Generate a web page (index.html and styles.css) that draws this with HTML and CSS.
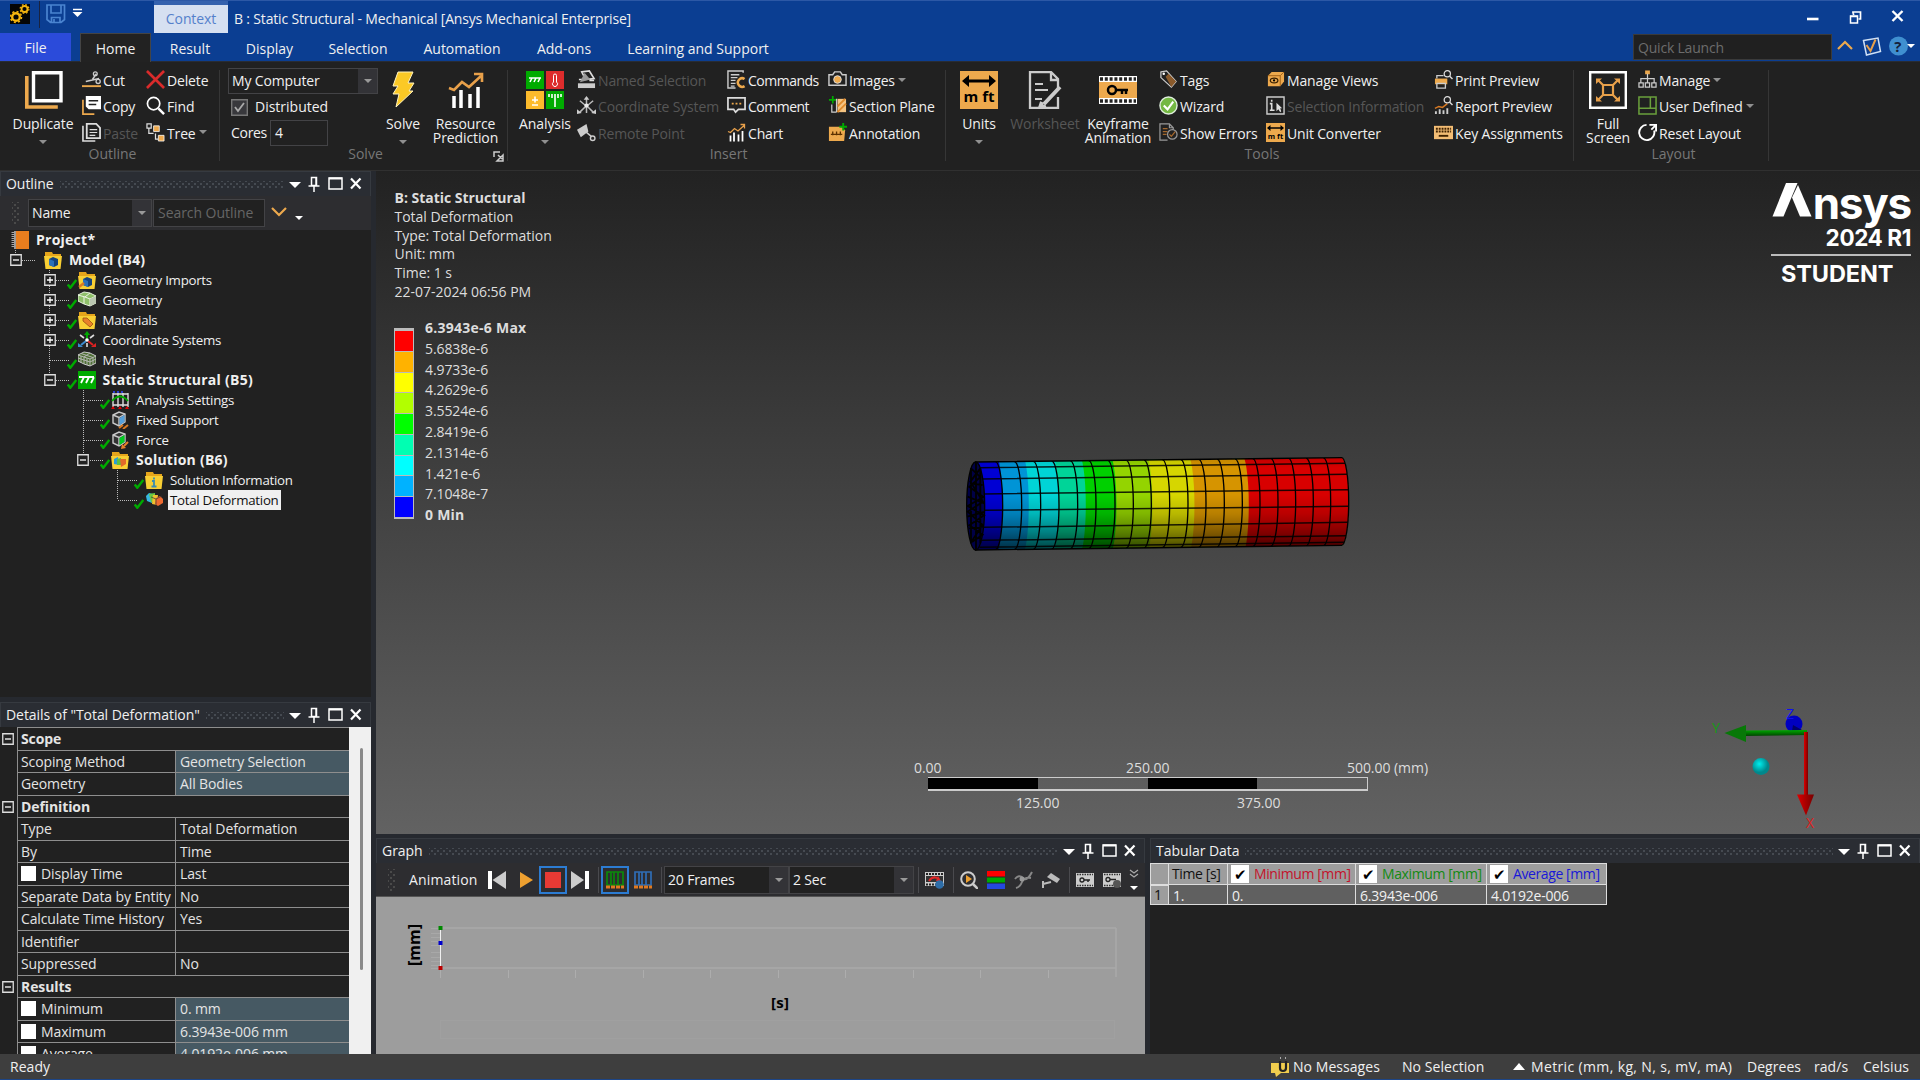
FILE: index.html
```html
<!DOCTYPE html>
<html lang="en">
<head>
<meta charset="utf-8">
<title>B : Static Structural - Mechanical</title>
<link rel="stylesheet" href="styles.css">
</head>
<body>
<svg class="defs" width="0" height="0">
  <defs>
    <symbol id="ctl" viewBox="0 0 76 18">
      <path d="M0 7h12l-6 6z" fill="#fff"/>
      <path d="M22.500 2.500h5v8h-5zM27 3v8M19.500 11h11M25 11v6" fill="none" stroke="#fff" stroke-width="1.500"/>
      <path d="M40 3h13v11h-13z" fill="none" stroke="#fff" stroke-width="1.500"/><path d="M40 3.500h13" stroke="#fff" stroke-width="2"/>
      <path d="M62 3.500l9.500 10M71.500 3.500l-9.500 10" stroke="#fff" stroke-width="2.200"/>
    </symbol>
    <symbol id="folder" viewBox="0 0 18 18"><path d="M1 1h7l1 2h8v3H1z" fill="#e5a51b"/><path d="M0 5h18l-1.500 13h-15z" fill="#f8cf34"/></symbol>
    <symbol id="check" viewBox="0 0 10 10"><path d="M.8 5.500l2.500 3.300L9.300 1" fill="none" stroke="#0a0" stroke-width="2.400"/></symbol>
    <symbol id="cube" viewBox="0 0 18 18"><path d="M2 4l6-3 6 2v8l-6 4-6-3z" fill="#333" stroke="#c8c8c8" stroke-width="1.400"/><path d="M2 4l6 2.500L14 3M8 6.500V15" fill="none" stroke="#c8c8c8" stroke-width="1.400"/></symbol>
    <symbol id="minus" viewBox="0 0 12 12"><path d="M.75.75h10.500v10.500H.75z" fill="#222" stroke="#ddd" stroke-width="1.300"/><path d="M3 6h6" stroke="#fff" stroke-width="1.300"/></symbol>
    <symbol id="plus" viewBox="0 0 12 12"><path d="M.75.75h10.500v10.500H.75z" fill="#222" stroke="#ddd" stroke-width="1.300"/><path d="M3 6h6M6 3v6" stroke="#fff" stroke-width="1.300"/></symbol>
    <symbol id="chart" viewBox="0 0 38 38"><path d="M2 17l5 2 8-8 7 5L34 5M27 3h8v8" fill="none" stroke="#e8a04a" stroke-width="2.600"/><path d="M7 25v12M14 19v18M23 23v14M31 16v21" stroke="#fff" stroke-width="3.500"/></symbol>
    <symbol id="mft" viewBox="0 0 38 38"><path d="M0 0h38v38H0z" fill="#eda94d"/><path d="M2 10l7-6v4.500h20V4l7 6-7 6v-4.500H9V16z" fill="#000"/><text x="3.500" y="31" font-family="Open Sans" font-weight="700" font-size="15" textLength="31">m ft</text></symbol>
    <symbol id="film" viewBox="0 0 38 28"><path d="M0 0h38v28H0z" fill="#fff"/><path d="M1 3h36M1 25h36" stroke="#222" stroke-width="3.500" stroke-dasharray="3 1.800"/></symbol>
  </defs>
</svg>

<header class="titlebar">
  <svg class="app" width="20" height="20" viewBox="0 0 20 20"><path d="M0 0h20v20H0z" fill="#050505"/><circle cx="6" cy="13" r="3.800" fill="none" stroke="#f5b50f" stroke-width="2.400"/><circle cx="6" cy="13" r="5.500" fill="none" stroke="#f5b50f" stroke-width="1.600" stroke-dasharray="2 2.300"/><circle cx="14.500" cy="5" r="3" fill="none" stroke="#f5b50f" stroke-width="1.800"/><circle cx="14.500" cy="5" r="4.400" fill="none" stroke="#f5b50f" stroke-width="1.200" stroke-dasharray="1.700 1.800"/></svg>
  <i class="tsep"></i>
  <svg class="save" width="20" height="20" viewBox="0 0 20 20"><path d="M1 1h17.500v14.500L15 18.500H4.500L1 15.500zM5 1v8h10V1M5.500 18.500v-5h8.500v5M8 15v3.500" fill="none" stroke="#4a84d0" stroke-width="1.700"/></svg>
  <svg class="qat" width="11" height="10" viewBox="0 0 11 10"><path d="M1 1.500h9" stroke="#fff" stroke-width="1.500"/><path d="M.5 4h10l-5 5z" fill="#fff"/></svg>
  <span class="context">Context</span>
  <span class="title">B : Static Structural - Mechanical [Ansys Mechanical Enterprise]</span>
  <svg class="winctl" width="100" height="16" viewBox="0 0 100 16"><path d="M0 11h11.500" stroke="#fff" stroke-width="2.600"/><path d="M43.500 8h7v7h-7z" fill="none" stroke="#fff" stroke-width="1.500"/><path d="M43 8.500h8M46.500 7V5.500M46 5.500V4h7.500v7H51.500M46 4h8" fill="none" stroke="#fff" stroke-width="1.700"/><path d="M85.500 3l10 10M95.500 3l-10 10" stroke="#fff" stroke-width="2.400"/></svg>
</header>

<nav class="tabs">
  <span class="file">File</span><span class="tab home">Home</span><span class="tab t1">Result</span><span class="tab t2">Display</span><span class="tab t3">Selection</span><span class="tab t4">Automation</span><span class="tab t5">Add-ons</span><span class="tab t6">Learning and Support</span>
  <div class="quick">Quick Launch</div>
  <svg class="tabicons" width="78" height="22" viewBox="0 0 78 22"><path d="M1 14l7-7 7 7" fill="none" stroke="#eda94d" stroke-width="2.200"/><path d="M26.500 5.500L41 3l2.500 13.500L29.500 20z" fill="none" stroke="#cfe0f6" stroke-width="1.500"/><path d="M29.500 10l4 6 5-11.500" fill="none" stroke="#e8a04a" stroke-width="2"/><circle cx="61.500" cy="11" r="9.500" fill="#3f8fd0"/><text x="57.200" y="16.500" font-size="15" font-weight="700" fill="#14213a">?</text><path d="M70 9h8l-4 4z" fill="#fff"/></svg>
</nav>

<section class="ribbon">
  <div class="group g-outline">
    <div class="items">
      <div class="big b-dup"><svg width="38" height="38" viewBox="0 0 38 38"><path d="M1 6v31h31" fill="none" stroke="#eda94d" stroke-width="3.600" transform="translate(.8 -1)"/><path d="M8.500 1.700h27.500v28H8.500z" fill="#222" stroke="#fff" stroke-width="3.400"/></svg><span>Duplicate</span><i class="dd"></i></div>
      <div class="col c64">
        <div class="btn"><svg viewBox="0 0 20 20"><path d="M0 17h20" stroke="#eda94d" stroke-width="2"/><path d="M4 12L18 9M11 10l4-6" stroke="#ccc" stroke-width="1.600"/><circle cx="14" cy="4" r="2" fill="none" stroke="#ccc" stroke-width="1.400"/><circle cx="17" cy="12" r="2.200" fill="none" stroke="#ccc" stroke-width="1.400"/></svg>Cut</div>
        <div class="btn"><svg viewBox="0 0 20 20"><path d="M1 4v15h12" fill="none" stroke="#eda94d" stroke-width="1.800"/><path d="M4 0h16v14H7l-3-3z" fill="#fff"/><path d="M7 5h10M7 9h8" stroke="#222" stroke-width="1.500"/></svg>Copy</div>
        <div class="btn off"><svg viewBox="0 0 20 20"><path d="M1 3v16h13" fill="none" stroke="#ddd" stroke-width="1.700"/><path d="M5 1h10l4 4v11H5z" fill="none" stroke="#ddd" stroke-width="1.900"/><path d="M8 7h8M8 10h8M8 13h6" stroke="#ddd" stroke-width="1.300"/></svg>Paste</div>
      </div>
      <div class="col c74">
        <div class="btn"><svg viewBox="0 0 20 20"><path d="M1 1l18 18M19 1L1 19" stroke="#d92b2b" stroke-width="2.800"/></svg>Delete</div>
        <div class="btn"><svg viewBox="0 0 20 20"><circle cx="8" cy="8" r="6.500" fill="none" stroke="#fff" stroke-width="1.800"/><path d="M13 13l6 6" stroke="#fff" stroke-width="2.600"/></svg>Find</div>
        <div class="btn"><svg viewBox="0 0 20 20"><path d="M1 1h4.500v4.500H1zM3 5v6h5M10 11v6h3" fill="none" stroke="#ddd" stroke-width="1.300"/><path d="M8 3h6v6H8zM13 13h6v6h-6z" fill="#eda94d" stroke="#fff" stroke-width=".8"/></svg>Tree<i class="dd in"></i></div>
      </div>
    </div>
    <div class="glabel">Outline</div>
  </div>
  <div class="group g-solve">
    <div class="items">
      <div class="form">
        <div class="combo rc">My Computer<i class="arr"></i></div>
        <div class="frow"><svg width="17" height="17" viewBox="0 0 17 17"><path d="M.7.7h15.600v15.600H.7z" fill="#38383c" stroke="#777" stroke-width="1.400"/><path d="M4 8l3 4 6-8" fill="none" stroke="#aaa" stroke-width="1.800"/></svg><span class="dist">Distributed</span></div>
        <div class="frow"><span class="cores">Cores</span><span class="input">4</span></div>
      </div>
      <div class="big b-solve"><svg width="24" height="38" viewBox="0 0 24 38"><path d="M7 1h15l-5 11h6l-5 8h4L5 36l3-13H2l5-8H2z" fill="#fbc926" stroke="#fff3c0"/></svg><span>Solve</span><i class="dd"></i></div>
      <div class="big b-res"><svg width="38" height="38"><use href="#chart"/></svg><span>Resource<br>Prediction</span></div>
    </div>
    <div class="glabel">Solve<svg class="launch" width="11" height="11" viewBox="0 0 11 11"><path d="M1 6V1h6M5 4l4 4M10 4v6H4z" fill="none" stroke="#ccc" stroke-width="1.500"/></svg></div>
  </div>
  <div class="group g-insert">
    <div class="items">
      <div class="big b-ana"><svg width="38" height="38" viewBox="0 0 38 38"><path d="M0 0h18v18H0zM20 20h18v18H20z" fill="#00ab00"/><path d="M20 0h18v18H20z" fill="#dd2c2c"/><path d="M0 20h18v18H0z" fill="#fdbb2c"/><path d="M3 7h12M6 7l-2 4M10 7l-2 4M14 7l-2 4M6 29h6M9 25.500v6M6 34h6M29 23v13M23 23v3M26 23v4M32 23v4M35 23v3" stroke="#fff" stroke-width="1.600"/><path d="M27.500 11V4.500a1.500 1.500 0 0 1 3 0V11a2.500 2.500 0 1 1-3 0z" fill="none" stroke="#fff"/></svg><span>Analysis</span><i class="dd"></i></div>
      <div class="col c150">
        <div class="btn off"><svg viewBox="0 0 20 20"><path d="M5 2l8-1 5 8-9 1zM2 10h6M13 11h5" fill="none" stroke="#ddd" stroke-width="1.700"/><path d="M1 14h18v5H1z" fill="#ccc"/><path d="M3 13L8 3l6 7z" fill="#999"/></svg>Named Selection</div>
        <div class="btn off"><svg viewBox="0 0 20 20"><path d="M10 9V2M10 11v7M9 10L3 5M11 10l6-5M9 11l-6 6M11 11l6 6" stroke="#bbb" stroke-width="1.600"/><path d="M10 0l3 4H7zM0 19v-5l5 4zM20 19v-5l-5 4z" fill="#ccc"/><circle cx="10" cy="10" r="2.200" fill="#eee"/></svg>Coordinate System</div>
        <div class="btn off"><svg viewBox="0 0 20 20"><path d="M0 7l10-6 2 8-8 6z" fill="#ccc"/><path d="M9 9l6 5" stroke="#ccc" stroke-width="1.600"/><circle cx="16.500" cy="16" r="2.400" fill="none" stroke="#ccc" stroke-width="1.500"/></svg>Remote Point</div>
      </div>
      <div class="col c101">
        <div class="btn cmd"><svg viewBox="0 0 20 20"><path d="M17 3V1H1v18h8" fill="none" stroke="#ccc" stroke-width="1.500"/><path d="M4 5h9M4 8h7M4 11h5M4 14h5M4 17h4" stroke="#ccc" stroke-width="1.400"/><path d="M18.500 9.500A4.500 4.500 0 1 0 18.500 17" fill="none" stroke="#eda94d" stroke-width="2.600"/></svg>Commands</div>
        <div class="btn cmd"><svg viewBox="0 0 20 20"><path d="M1 2h18v12h-7l-3 3-2-3H1z" fill="none" stroke="#ddd" stroke-width="1.800"/><path d="M5 8h2M9 8h2M13 8h2" stroke="#eda94d" stroke-width="2"/></svg>Comment</div>
        <div class="btn"><svg><use href="#chart"/></svg>Chart</div>
      </div>
      <div class="col c118">
        <div class="btn"><svg viewBox="0 0 20 20"><path d="M1 5h4l2-3h6l2 3h4v11H1z" fill="none" stroke="#ccc" stroke-width="1.500"/><circle cx="10" cy="10" r="4" fill="#eda94d" stroke="#ddd"/></svg>Images<i class="dd in"></i></div>
        <div class="btn"><svg viewBox="0 0 20 20"><path d="M5 0v8M1 4h8" stroke="#0a0" stroke-width="1.800"/><path d="M4 9v8h5M9 3v14" fill="none" stroke="#ccc" stroke-width="1.300"/><path d="M10 3h9v14h-9z" fill="#f4c382"/><path d="M10 11l8-8M10 17l9-9" stroke="#df8a2c" stroke-width="2"/></svg>Section Plane</div>
        <div class="btn"><svg viewBox="0 0 20 20"><path d="M1 4h14l3 4-1 11H1z" fill="#eda94d"/><path d="M3 12h12M5 9v4M9 9v4M13 9v4" stroke="#5b3000" stroke-width="1.400"/><path d="M16 0v8M12 4h8" stroke="#0a0" stroke-width="2"/></svg>Annotation</div>
      </div>
    </div>
    <div class="glabel">Insert</div>
  </div>
  <div class="group g-tools">
    <div class="items">
      <div class="big b-units"><svg width="38" height="38"><use href="#mft"/></svg><span>Units</span><i class="dd"></i></div>
      <div class="big b-work off"><svg width="38" height="38" viewBox="0 0 38 38"><path d="M25 1H4v36h28V26M32 17V8l-7-7v8h7" fill="none" stroke="#ccc" stroke-width="2.300"/><path d="M9 13h8M9 19h13M9 28h7" stroke="#ccc" stroke-width="2"/><path d="M34 16L18 33M16 31l-2 6 6-2" stroke="#ccc" stroke-width="4"/></svg><span>Worksheet</span></div>
      <div class="big b-key"><svg width="38" height="38" viewBox="0 0 38 38"><use href="#film" y="5" width="38" height="28"/><path d="M0 11h38v16H0z" fill="#eda94d"/><circle cx="13" cy="19" r="4" fill="none" stroke="#000" stroke-width="2.500"/><path d="M16 19h13M23 19v4M27 19v4" stroke="#000" stroke-width="2.500"/></svg><span>Keyframe<br>Animation</span></div>
      <div class="col c107">
        <div class="btn"><svg viewBox="0 0 20 20"><path d="M2 2l6-1 10 11-5 6L2 8z" fill="none" stroke="#ccc" stroke-width="1.300"/><path d="M7 7l3-3 8 8-5 6z" fill="#8a5a2b"/><circle cx="5" cy="4" r="1.300" fill="#fff"/></svg>Tags</div>
        <div class="btn"><svg viewBox="0 0 20 20"><circle cx="10" cy="10" r="9" fill="#74b843" stroke="#dfeedd" stroke-width="1.500"/><path d="M5 10l4 4 6-8" fill="none" stroke="#fff" stroke-width="2.200"/></svg>Wizard</div>
        <div class="btn"><svg viewBox="0 0 20 20"><path d="M9 18H1V1h10l4 4v2M11 1v4h4" fill="none" stroke="#999" stroke-width="1.300"/><path d="M4 6h5M4 9h5M4 12h4" stroke="#a5682c" stroke-width="1.400"/><circle cx="14" cy="12" r="5" fill="none" stroke="#999" stroke-width="1.300"/><path d="M11 12l2 2 4-5" fill="none" stroke="#a5682c" stroke-width="1.300"/></svg>Show Errors</div>
      </div>
      <div class="col c168">
        <div class="btn"><svg viewBox="0 0 20 20"><path d="M2 6l4-4h13v10l-4 5H2z" fill="#eda94d"/><path d="M2 6h13v11M15 6l4-4" fill="none" stroke="#a06014"/><ellipse cx="8.500" cy="11" rx="4" ry="2.500" fill="none" stroke="#3a2000" stroke-width="1.300"/><circle cx="8.500" cy="11" r="1.200"/></svg>Manage Views</div>
        <div class="btn off"><svg viewBox="0 0 20 20"><path d="M1 1h18v18H1z" fill="none" stroke="#ccc" stroke-width="1.500"/><path d="M6 4v2M4 8h2v7M4 15h5" fill="none" stroke="#ddd" stroke-width="1.700"/><path d="M11 7v9l2-2 2 3 1-1-1-3h2z" fill="#ddd"/></svg>Selection Information</div>
        <div class="btn"><svg><use href="#mft"/></svg>Unit Converter</div>
      </div>
      <div class="col c130">
        <div class="btn"><svg viewBox="0 0 20 20"><path d="M1 9h13v6H1z" fill="#eda94d"/><path d="M3 9V6h7M3 14h9v5H3z" fill="none" stroke="#ccc" stroke-width="1.400"/><circle cx="14" cy="4" r="3.300" fill="none" stroke="#ddd" stroke-width="1.300"/><path d="M16.500 6.500l3 3" stroke="#ddd" stroke-width="1.500"/></svg>Print Preview</div>
        <div class="btn"><svg viewBox="0 0 20 20"><path d="M2 19v-3M6 19v-5M10 19v-4M14 19v-6" stroke="#ccc" stroke-width="2"/><path d="M1 13l4-2 4 1 5-4" fill="none" stroke="#d87922" stroke-width="1.500"/><circle cx="14" cy="4" r="3.300" fill="none" stroke="#ddd" stroke-width="1.300"/><path d="M16.500 6.500l3 3" stroke="#ddd" stroke-width="1.500"/></svg>Report Preview</div>
        <div class="btn"><svg viewBox="0 0 20 20"><path d="M0 3h20v14H0z" fill="#f3bd74"/><path d="M2 6h16M2 9h16" stroke="#402200" stroke-width="2" stroke-dasharray="2 1"/><path d="M5 13.500h10" stroke="#402200" stroke-width="2"/></svg>Key Assignments</div>
      </div>
    </div>
    <div class="glabel">Tools</div>
  </div>
  <div class="group g-layout">
    <div class="items">
      <div class="big b-full"><svg width="38" height="38" viewBox="0 0 38 38"><path d="M1.200 1.200h35.600v35.600H1.200z" fill="none" stroke="#fff" stroke-width="2.400"/><path d="M14 14h10v10H14zM14 14L9 9M24 14l5-5M14 24l-5 5M24 24l5 5" fill="none" stroke="#e8a04a" stroke-width="2.200"/><path d="M7 13V7.500h6zM31 13V7.500h-6zM7 25v5.500h6zM31 25v5.500h-6z" fill="#e8a04a"/></svg><span>Full<br>Screen</span></div>
      <div class="col c120">
        <div class="btn"><svg viewBox="0 0 20 20"><path d="M7.500.5h5v4h-5z" fill="#eda94d"/><path d="M10 4v9M3 13V9h14v4M1 13.500h4.500V18H1zM7.700 13.500h4.500V18H7.700zM14.500 13.500H19V18h-4.500z" fill="none" stroke="#ccc" stroke-width="1.300"/></svg>Manage<i class="dd in"></i></div>
        <div class="btn"><svg viewBox="0 0 20 20"><path d="M1 1h18v18H1zM1 13h18M13 1v12" fill="none" stroke="#6aa03c" stroke-width="1.600"/></svg>User Defined<i class="dd in"></i></div>
        <div class="btn"><svg viewBox="0 0 20 20"><path d="M9 2A8 8 0 1 0 17 8" fill="none" stroke="#fff" stroke-width="2"/><path d="M12 2h7v7M18 3l-4 4" fill="none" stroke="#fff" stroke-width="2"/></svg>Reset Layout</div>
      </div>
    </div>
    <div class="glabel">Layout</div>
  </div>
</section>

<main class="work">
  <aside class="left">
    <section class="outline">
      <div class="phead"><span>Outline</span><i class="dots"></i><svg width="76" height="18"><use href="#ctl"/></svg></div>
      <div class="obar"><i class="grip"></i><div class="combo oc">Name<i class="arr"></i></div><div class="search">Search Outline</div><svg width="32" height="18" viewBox="0 0 32 18"><path d="M1 4l7 7 7-7" fill="none" stroke="#eda94d" stroke-width="2.200"/><path d="M24 12h8l-4 4z" fill="#fff"/></svg></div>
      <div class="tree">
        <svg class="lines" width="130" height="280" viewBox="0 0 130 280"><path d="M15.500 20v4M49.500 40v105M83.500 160v65M117.500 240v30M22 30.500h13M56 50.500h13M56 70.500h13M56 90.500h13M56 110.500h13M50 130.500h19M56 150.500h13M84 170.500h19M84 190.500h19M84 210.500h19M90 230.500h13M118 250.500h19M118 270.500h19" fill="none" stroke="#bbb" stroke-dasharray="1 1"/></svg>
        <div class="node root"><svg class="ic" viewBox="0 0 18 18"><path d="M5 0h13v18H5z" fill="#e87d1e"/><path d="M3 0h2v18H3z" fill="#999"/><path d="M2 1v16" stroke="#aaa" stroke-width="3" stroke-dasharray="1 1"/></svg><b>Project*</b></div>
        <div class="node n1"><svg class="ex"><use href="#minus"/></svg><i class="ck"></i><svg class="ic" viewBox="0 0 18 18"><use href="#folder"/><path d="M5 8l4-2 5 2v6l-4 2-5-2z" fill="#14427c"/><path d="M5 8l5 2v6l-5-2z" fill="#2b70b8"/></svg><b>Model (B4)</b></div>
        <div class="node n2"><svg class="ex"><use href="#plus"/></svg><svg class="ck"><use href="#check"/></svg><svg class="ic" viewBox="0 0 18 18"><use href="#folder"/><path d="M5 8l4-2 5 2v6l-4 2-5-2z" fill="#14427c"/><path d="M5 8l5 2v6l-5-2z" fill="#2b70b8"/><path d="M1 16l5-4" stroke="#d87922" stroke-width="2.500"/></svg>Geometry Imports</div>
        <div class="node n2"><svg class="ex"><use href="#plus"/></svg><svg class="ck"><use href="#check"/></svg><svg class="ic" viewBox="0 0 18 18"><path d="M0 4l6-3 6 1 6 3v7l-6 3-6-2-6-3z" fill="#8fc06a" stroke="#e6f2dc"/><path d="M0 4l7 2 5-4M6 6v7M7 6l5 2 6-3M12 8v7" fill="none" stroke="#eef6e6"/><path d="M12 8l6-3v7l-6 3z" fill="#b9c6b0"/></svg>Geometry</div>
        <div class="node n2"><svg class="ex"><use href="#plus"/></svg><svg class="ck"><use href="#check"/></svg><svg class="ic" viewBox="0 0 18 18"><use href="#folder"/><path d="M5 7h4l6 6-3 3-7-6z" fill="#e8822a" stroke="#9a5010" stroke-width=".8"/></svg>Materials</div>
        <div class="node n2"><svg class="ex"><use href="#plus"/></svg><svg class="ck"><use href="#check"/></svg><svg class="ic" viewBox="0 0 18 18"><path d="M9 8V3" stroke="#0a0" stroke-width="2"/><path d="M9 0l3 4H6z" fill="#0a0"/><path d="M8 10l-5 4" stroke="#3b8cd0" stroke-width="2"/><path d="M0 16v-4l5 4z" fill="#3b8cd0"/><path d="M10 10l5 4" stroke="#d22" stroke-width="2"/><path d="M18 16v-4l-5 4z" fill="#d22"/><path d="M2 4l4 3M16 4l-4 3M9 12v4" stroke="#ddd" stroke-width="1.600"/><circle cx="9" cy="9" r="1.800" fill="#fff"/></svg>Coordinate Systems</div>
        <div class="node n2"><i class="ex"></i><svg class="ck"><use href="#check"/></svg><svg class="ic" viewBox="0 0 18 18"><path d="M0 4l6-3 6 1 6 3v7l-6 3-6-2-6-3z" fill="#4f6f35" stroke="#ccc"/><path d="M0 4l6 2 6 2 6-3M12 8v7M6 6v7M6 6l6-4M3 5v7M9 7v7M15 6.500v7M0 7l12 4 6-3M3 2.500l12 4" fill="none" stroke="#bbb" stroke-width=".9"/></svg>Mesh</div>
        <div class="node n2"><svg class="ex"><use href="#minus"/></svg><svg class="ck"><use href="#check"/></svg><svg class="ic" viewBox="0 0 18 18"><path d="M0 0h18v18H0z" fill="#00ab00"/><path d="M1 6h15M6 6l-3 6M11 6l-3 6M16 6l-3 6" stroke="#fff" stroke-width="1.800"/></svg><b>Static Structural (B5)</b></div>
        <div class="node n3"><i class="ex"></i><svg class="ck"><use href="#check"/></svg><svg class="ic" viewBox="0 0 18 18"><path d="M2 2v14M7 2v14M12 2v14M17 2v14M2 3h15M2 14h15" stroke="#ddd" stroke-width="1.400"/><path d="M1 10q8-9 16 0" fill="none" stroke="#0a0" stroke-width="1.800"/><path d="M2 1h12" stroke="#2a3fd0" stroke-width="2" stroke-dasharray="2 2"/><path d="M0 18l2-3 2 3zM7 18l2-3 2 3zM14 18l2-3 2 3z" fill="#d00"/></svg>Analysis Settings</div>
        <div class="node n3"><i class="ex"></i><svg class="ck"><use href="#check"/></svg><svg class="ic" viewBox="0 0 18 18"><use href="#cube"/><path d="M8.500 7L13.500 4v7l-5 3z" fill="#55a0dc"/><path d="M8 17l4-3M12 18l5-4" stroke="#d87922" stroke-width="2"/></svg>Fixed Support</div>
        <div class="node n3"><i class="ex"></i><svg class="ck"><use href="#check"/></svg><svg class="ic" viewBox="0 0 18 18"><use href="#cube"/><path d="M8.500 7L13.500 4v7l-5 3z" fill="#0c2"/><path d="M17 11l-4 4" stroke="#e8822a" stroke-width="2"/><path d="M10 18l1-5 4 4z" fill="#e8822a"/></svg>Force</div>
        <div class="node n3"><svg class="ex"><use href="#minus"/></svg><svg class="ck"><use href="#check"/></svg><svg class="ic" viewBox="0 0 18 18"><use href="#folder"/><path d="M3 8l4-2 1 8-5-1z" fill="#2b9fd0"/><path d="M6 8l4-1v7l-4 0z" fill="#5cc040"/><path d="M9 8l6 0v5l-5 3z" fill="#e06a2a"/></svg><b>Solution (B6)</b></div>
        <div class="node n4"><i class="ex"></i><svg class="ck"><use href="#check"/></svg><svg class="ic" viewBox="0 0 18 18"><use href="#folder"/><path d="M9 6.500v2M7 10h2v5M6.500 15.500h5" fill="none" stroke="#3b8cb0" stroke-width="1.800"/></svg>Solution Information</div>
        <div class="node n4"><i class="ex"></i><svg class="ck"><use href="#check"/></svg><svg class="ic" viewBox="0 0 18 18"><path d="M1 5l3-3 4 1-1 9-5-2z" fill="#35b8e0"/><path d="M4 3l6-1v10l-4-1z" fill="#6cc840"/><path d="M8 4l5 0-1 10-5-1z" fill="#f0c030"/><path d="M11 7l4-2 3 3v4l-5 3-3-2z" fill="#ee6a30"/><path d="M6 6l5 2 6-3M11 8v6" fill="none" stroke="#333" stroke-width=".7"/></svg><span class="sel">Total Deformation</span></div>
      </div>
    </section>
    <section class="details">
      <div class="phead"><span>Details of "Total Deformation"</span><i class="dots"></i><svg width="76" height="18"><use href="#ctl"/></svg></div>
      <div class="dbody">
        <div class="grid">
          <div class="dr cat"><svg class="ex"><use href="#minus"/></svg><b>Scope</b></div>
          <div class="dr ro"><span>Scoping Method</span><span>Geometry Selection</span></div>
          <div class="dr ro"><span>Geometry</span><span>All Bodies</span></div>
          <div class="dr cat"><svg class="ex"><use href="#minus"/></svg><b>Definition</b></div>
          <div class="dr"><span>Type</span><span>Total Deformation</span></div>
          <div class="dr"><span>By</span><span>Time</span></div>
          <div class="dr"><span><i class="cb"></i>Display Time</span><span>Last</span></div>
          <div class="dr"><span>Separate Data by Entity</span><span>No</span></div>
          <div class="dr"><span>Calculate Time History</span><span>Yes</span></div>
          <div class="dr"><span>Identifier</span><span></span></div>
          <div class="dr"><span>Suppressed</span><span>No</span></div>
          <div class="dr cat"><svg class="ex"><use href="#minus"/></svg><b>Results</b></div>
          <div class="dr ro"><span><i class="cb"></i>Minimum</span><span>0. mm</span></div>
          <div class="dr ro"><span><i class="cb"></i>Maximum</span><span>6.3943e-006 mm</span></div>
          <div class="dr ro"><span><i class="cb"></i>Average</span><span>4.0192e-006 mm</span></div>
        </div>
        <div class="scroll"><i></i></div>
      </div>
    </section>
  </aside>

  <div class="right">
    <section class="view">
      <div class="caption"><b>B: Static Structural</b><span>Total Deformation</span><span>Type: Total Deformation</span><span>Unit: mm</span><span>Time: 1 s</span><span>22-07-2024 06:56 PM</span></div>
      <div class="legend">
        <div class="bar"><i class="k1"></i><i class="k2"></i><i class="k3"></i><i class="k4"></i><i class="k5"></i><i class="k6"></i><i class="k7"></i><i class="k8"></i><i class="k9"></i></div>
        <div class="vals"><b>6.3943e-6 Max</b><span>5.6838e-6</span><span>4.9733e-6</span><span>4.2629e-6</span><span>3.5524e-6</span><span>2.8419e-6</span><span>2.1314e-6</span><span>1.421e-6</span><span>7.1048e-7</span><b>0 Min</b></div>
      </div>
      <div class="logo">
        <div class="brand"><span class="a">A</span>nsys<svg width="42" height="36" viewBox="0 0 42 36"><path d="M.5 34.500L14 1h11.500L11.500 34.500z" fill="#fff"/><path d="M20 15.500L26 3l13.500 31.500H28z" fill="#fff"/></svg></div>
        <div class="ver">2024 R1</div>
        <div class="stu">STUDENT</div>
      </div>
      <svg class="model" width="430" height="130" viewBox="0 0 1290 390">
        <defs>
          <clipPath id="body"><path d="M105 66L1205 53A21 131 0 0 1 1205 316L105 330A28 132 0 0 0 105 66z"/></clipPath>
          <path id="band" d="M0 40A22 146 0 0 1 0 350H1300V40z"/>
          <path id="rib" d="M0 66A22 132 0 0 1 0 330" fill="none" stroke="#000" stroke-width="4"/>
          <linearGradient id="shade" x1="0" y1="0" x2="0" y2="1"><stop offset="0" stop-opacity=".12"/><stop offset=".12" stop-opacity="0"/><stop offset=".4" stop-opacity="0"/><stop offset=".6" stop-opacity=".14"/><stop offset=".8" stop-opacity=".4"/><stop offset="1" stop-opacity=".72"/></linearGradient>
        </defs>
        <g clip-path="url(#body)">
          <path d="M90 40h1150v310H90z" fill="#0000d4"/>
          <use href="#band" x="164" fill="#0094d6"/><use href="#band" x="243" fill="#00d4d6"/><use href="#band" x="333" fill="#00d498"/><use href="#band" x="414" fill="#00d000"/><use href="#band" x="506" fill="#94d400"/><use href="#band" x="614" fill="#d6d600"/><use href="#band" x="740" fill="#d69400"/><use href="#band" x="903" fill="#d80000"/>
          <path d="M90 50h1150v285H90z" fill="url(#shade)"/>
          <use href="#rib" x="166" y="-1"/><use href="#rib" x="223" y="-1.500"/><use href="#rib" x="280" y="-2"/><use href="#rib" x="335" y="-3"/><use href="#rib" x="391" y="-3.500"/><use href="#rib" x="446" y="-4"/><use href="#rib" x="503" y="-5"/><use href="#rib" x="558" y="-5.500"/><use href="#rib" x="612" y="-6"/><use href="#rib" x="667" y="-7"/><use href="#rib" x="722" y="-7.500"/><use href="#rib" x="776" y="-8"/><use href="#rib" x="831" y="-9"/><use href="#rib" x="885" y="-9.500"/><use href="#rib" x="938" y="-10"/><use href="#rib" x="992" y="-11"/><use href="#rib" x="1045" y="-11.500"/><use href="#rib" x="1098" y="-12"/><use href="#rib" x="1150" y="-12.500"/>
          <path d="M118 83L1218 70M125 117L1222 103M130 162L1225 149M132 211L1225 199M130 262L1224 247M125 301L1220 287M118 322L1212 307" fill="none" stroke="#000" stroke-width="4.500" stroke-opacity=".85"/>
        </g>
        <path d="M105 66L1205 53A21 131 0 0 1 1205 316L105 330" fill="none" stroke="#000" stroke-width="4"/>
        <ellipse cx="107" cy="198" rx="27" ry="132" fill="#000046" stroke="#000" stroke-width="4"/>
        <path d="M93 85l28 26-33 30 42 30-47 27 49 28-44 30 40 28-32 22M108 66v264M93 85v225M121 85v225M121 85l-30 40 38 60-46 30 45 40-34 50M83 170l50 20M82 230l50-14M86 265l46-5M90 130l38 5" fill="none" stroke="#000" stroke-width="5.500"/>
      </svg>
      <div class="ruler">
        <div class="top"><span>0.00</span><span>250.00</span><span>500.00 (mm)</span></div>
        <div class="rbar"><i class="on"></i><i></i><i class="on"></i><i></i></div>
        <div class="bot"><span>125.00</span><span>375.00</span></div>
      </div>
      <svg class="triad" width="120" height="134" viewBox="0 0 120 134">
        <defs><radialGradient id="cy" cx=".4" cy=".35"><stop offset="0" stop-color="#0ee"/><stop offset="1" stop-color="#00888c"/></radialGradient><linearGradient id="rd"><stop offset="0" stop-color="#d00"/><stop offset="1" stop-color="#700"/></linearGradient><linearGradient id="gn" x1="0" y1="0" x2="0" y2="1"><stop offset="0" stop-color="#0a0"/><stop offset="1" stop-color="#040"/></linearGradient></defs>
        <ellipse cx="84" cy="24" rx="8.500" ry="8.500" fill="#0000c0"/><path d="M83 25l9 5-10 1z" fill="#00006a"/>
        <path d="M35 30.500L97 30v5l-62 1z" fill="url(#gn)"/><path d="M14.500 33L36 25v17z" fill="#087808"/>
        <path d="M94 32h4v64h-4z" fill="url(#rd)"/><path d="M87 94.500h17L96 115.500z" fill="url(#rd)"/>
        <ellipse cx="51" cy="66.500" rx="8.500" ry="8.500" fill="url(#cy)"/>
        <text x="2" y="33" fill="#149a14">Y</text><text x="76" y="19" fill="#1010f0">Z</text><text x="96" y="128" fill="#e02020">X</text>
      </svg>
    </section>

    <div class="bottom">
      <section class="graph">
        <div class="phead"><span>Graph</span><i class="dots"></i><svg width="76" height="18"><use href="#ctl"/></svg></div>
        <div class="gbar">
          <i class="grip"></i><span class="anim">Animation</span>
          <svg class="s1" width="19" height="18" viewBox="0 0 19 18"><path d="M0 0h4v18H0z" fill="#fff"/><path d="M18 0v18L4.500 9z" fill="#ccc"/></svg>
          <svg class="s2" width="13" height="16" viewBox="0 0 13 16"><path d="M0 0l13 8-13 8z" fill="#eda030"/></svg>
          <span class="tog"><svg width="16" height="16"><path d="M0 0h16v16H0z" fill="#e83a34"/></svg></span>
          <svg class="s3" width="18" height="18" viewBox="0 0 18 18"><path d="M14 0h4v18h-4z" fill="#fff"/><path d="M0 0v18L13 9z" fill="#ccc"/></svg>
          <i class="sep"></i>
          <span class="tog"><svg width="18" height="18" viewBox="0 0 18 18"><path d="M1 1h16v13H1zM5 1v13M8 1v13M12 1v13" fill="none" stroke="#0b8a0b" stroke-width="1.700"/><path d="M0 16h18" stroke="#e07a20" stroke-width="3" stroke-dasharray="4 1"/></svg></span>
          <svg class="s4" width="18" height="18" viewBox="0 0 18 18"><path d="M1 1h16v13H1zM5 1v13M8 1v13M12 1v13" fill="none" stroke="#2f6db5" stroke-width="1.700"/><path d="M0 16h18" stroke="#e07a20" stroke-width="3" stroke-dasharray="4 1"/></svg>
          <i class="sep s5"></i>
          <div class="combo gc">20 Frames<i class="arr"></i></div><div class="combo gc">2 Sec<i class="arr"></i></div>
          <i class="sep s6"></i>
          <svg class="s7" width="20" height="18" viewBox="0 0 20 18"><path d="M0 1h19v14H0z" fill="#ccc"/><path d="M1 3h17M1 13.500h13" stroke="#222" stroke-width="2" stroke-dasharray="2 1"/><path d="M1 5h17v6H1z" fill="#333"/><path d="M4 10q4-6 10-2" fill="none" stroke="#e02828" stroke-width="2"/><path d="M13 5l3 5-5 0z" fill="#e02828"/><circle cx="14.500" cy="13.500" r="4.300" fill="#2e6da8"/></svg>
          <i class="sep s6"></i>
          <svg class="s7" width="18" height="18" viewBox="0 0 18 18"><circle cx="8" cy="8" r="6.800" fill="none" stroke="#ccc" stroke-width="2"/><path d="M6 4l6 4-6 4z" fill="#eda030"/><path d="M13 13l5 5" stroke="#ccc" stroke-width="2.500"/></svg>
          <svg class="s8" width="18" height="18" viewBox="0 0 18 18"><path d="M0 0h18v6H0z" fill="#f00"/><path d="M0 6h18v6H0z" fill="#00a800"/><path d="M0 12h18v6H0z" fill="#2448e0"/><path d="M0 6h18M0 12h18" stroke="#222"/></svg>
          <svg class="s8" width="19" height="18" viewBox="0 0 19 18"><path d="M1 8q4-5 8-1t9-6M2 17q4-1 6-6t9-4" fill="none" stroke="#888" stroke-width="2"/><circle cx="8" cy="8" r="2.500" fill="#999"/></svg>
          <svg class="s8" width="19" height="18" viewBox="0 0 19 18"><path d="M5 6l4-4 9 6-3 4z" fill="#bbb"/><path d="M1 10v7M1 13l8-2" stroke="#bbb" stroke-width="2"/></svg>
          <i class="sep s6"></i>
          <svg class="s9" width="18" height="14" viewBox="0 0 18 14"><path d="M0 0h18v14H0z" fill="#ccc"/><path d="M1 1.500h16M1 12.500h16" stroke="#333" stroke-width="1.500" stroke-dasharray="1.500 1"/><circle cx="6" cy="7" r="2" fill="none" stroke="#222" stroke-width="1.300"/><path d="M8 7h6M12 7v2" stroke="#222" stroke-width="1.500"/></svg>
          <svg class="s8" width="19" height="16" viewBox="0 0 19 16"><path d="M0 1h18v14H0z" fill="#ccc"/><path d="M1 2.500h16M1 13.500h10" stroke="#333" stroke-width="1.500" stroke-dasharray="1.500 1"/><circle cx="5" cy="7.500" r="2" fill="none" stroke="#222" stroke-width="1.300"/><path d="M7 7.500h6" stroke="#222" stroke-width="1.500"/><circle cx="14" cy="12" r="4" fill="#555"/></svg>
          <svg class="s10" width="10" height="22" viewBox="0 0 10 22"><path d="M1 1l4 3 4-3M1 5l4 3 4-3" fill="none" stroke="#aaa" stroke-width="1.200"/><path d="M1 17h8l-4 4z" fill="#fff"/></svg>
        </div>
        <svg class="plot" width="769" height="157" viewBox="0 0 769 157">
          <path d="M64.500 31H740M64.500 71H740M740 31v49" fill="none" stroke="#a9a9a9" stroke-width="1.500"/>
          <path d="M64.500 73v8M132.500 73v8M199.500 73v8M267.500 73v8M334.500 73v8M402.500 73v8M469.500 73v8M537.500 73v8M604.500 73v8M672.500 73v8" stroke="#adadad"/>
          <path d="M55 31.500h9M55 36.500h9M55 40.500h9M55 44.500h9M55 48.500h9M55 55.500h9M55 60.500h9M55 64.500h9M55 68.500h9M55 71.500h9" stroke="#a8a8a8"/>
          <path d="M64.500 123.500h674v18H64.500z" fill="none" stroke="#a0a0a0"/>
          <path d="M64.500 31v40" stroke="#f0f0f0"/><path d="M62.500 29h4v4h-4z" fill="#080"/><path d="M62.500 44h4v4h-4z" fill="#00c"/><path d="M62.500 69h4v4h-4z" fill="#b00"/>
          <text class="yl" transform="translate(43.500 69) rotate(-90)" textLength="42" lengthAdjust="spacingAndGlyphs">[mm]</text><text class="xl" x="395" y="111">[s]</text>
        </svg>
      </section>
      <section class="tabular">
        <div class="phead"><span>Tabular Data</span><i class="dots"></i><svg width="76" height="18"><use href="#ctl"/></svg></div>
        <div class="table">
          <div class="th"></div><div class="th">Time [s]</div><div class="th red"><i class="tick">✔</i>Minimum [mm]</div><div class="th green"><i class="tick">✔</i>Maximum [mm]</div><div class="th blue"><i class="tick">✔</i>Average [mm]</div>
          <div class="th num">1</div><div class="td">1.</div><div class="td">0.</div><div class="td">6.3943e-006</div><div class="td">4.0192e-006</div>
        </div>
      </section>
    </div>
  </div>
</main>

<footer class="status">
  <span class="ready">Ready</span>
  <span class="msg"><svg width="21" height="20" viewBox="0 0 21 20"><path d="M1 6h18v10h-8l-5 4-1-4H1z" fill="#f0cd4e"/><path d="M10 4v7a3 3 0 0 0 6 0V4" fill="none" stroke="#222" stroke-width="2.200"/><path d="M10 1h1M15 1h1" stroke="#aaa" stroke-width="2"/></svg>No Messages</span>
  <span class="nosel">No Selection</span>
  <span class="metric"><svg width="12" height="8" viewBox="0 0 12 8"><path d="M0 7l6-7 6 7z" fill="#fff"/></svg>Metric (mm, kg, N, s, mV, mA)</span>
  <span class="deg">Degrees</span><span class="rad">rad/s</span><span class="cel">Celsius</span>
</footer>
</body>
</html>
```
FILE: styles.css
```css
* { box-sizing: border-box; }
body { margin: 0; width: 1920px; height: 1080px; overflow: hidden; display: flex; flex-direction: column; background: #222; color: #f0f0f0; font: 14px/18px "Open Sans", "Noto Sans", sans-serif; white-space: nowrap; }
i { font-style: normal; }
svg { flex: none; display: block; }
.defs { position: absolute; }

.titlebar { height: 33px; flex: none; display: flex; background: #0b3e92; border-top: 1px solid #2c58a6; }
.app { margin: 3px 0 0 10px; }
.tsep { width: 1px; height: 27px; margin-left: 9px; background: #1a2340; }
.save { margin: 3px 0 0 6px; }
.qat { margin: 7px 0 0 6px; }
.context { width: 74px; margin-left: 71px; padding-top: 5px; background: #d6e0f1; border-top: 4px solid #3562ae; color: #5580cb; text-align: center; letter-spacing: -.1px; }
.title { margin: 9px 0 0 6px; letter-spacing: -.17px; }
.winctl { margin: 7px 13px 0 auto; }

.tabs { height: 29px; flex: none; display: flex; background: #0b3e92; border-bottom: 1px solid #282c34; }
.file { width: 71px; background: #2b4bda; text-align: center; line-height: 29px; }
.tab { text-align: center; line-height: 32px; }
.home { width: 71px; margin-left: 9px; height: 29px; background: #222; border: 1px solid #444; border-bottom: 0; line-height: 30px; }
.t1 { width: 78px; } .t2 { width: 81px; } .t3 { width: 96px; } .t4 { width: 112px; } .t5 { width: 92px; } .t6 { width: 176px; }
.quick { width: 199px; height: 26px; margin: 1px 0 0 847px; border: 1px solid #3a3a3a; background: #202020; color: #6c6c6c; padding: 4px 4px; letter-spacing: -.2px; }
.tabicons { margin: 2px 0 0 5px; }

.ribbon { height: 109px; flex: none; display: flex; background: #212121; border-bottom: 1px solid #303030; }
.group { display: flex; flex-direction: column; position: relative; }
.group::after { content: ""; position: absolute; right: 0; top: 8px; width: 1px; height: 91px; background: #363636; }
.g-outline { width: 220px; } .g-solve { width: 288px; } .g-insert { width: 438px; } .g-tools { width: 628px; } .g-layout { width: 195px; }
.items { display: flex; height: 82px; padding-top: 6px; }
.glabel { text-align: center; color: #777; line-height: 18px; margin-top: 1px; position: relative; }
.g-outline .glabel { padding-left: 5px; } .g-solve .glabel { padding-left: 3px; } .g-insert .glabel { padding-left: 3px; } .g-tools .glabel { padding-left: 4px; } .g-layout .glabel { padding-left: 4px; }
.launch { position: absolute; right: 4px; top: 6px; }
.big { display: flex; flex-direction: column; align-items: center; text-align: center; line-height: 14px; padding-top: 3px; letter-spacing: -.1px; }
.big span { margin-top: 8px; }
.big .dd { margin-top: 9px; }
.dd { width: 0; height: 0; border: 4px solid transparent; border-top-color: #909090; border-bottom: 0; }
.dd.in { margin: -3px 0 0 3px; }
.b-dup { width: 62px; margin-left: 12px; } .b-solve { width: 60px; margin-left: 0; } .b-res { width: 65px; }
.b-ana { width: 62px; margin-left: 6px; } .b-units { width: 62px; margin-left: 2px; } .b-work { width: 70px; } .b-key { width: 70px; margin-left: 3px; } .b-full { width: 58px; margin-left: 5px; }
.b-dup svg { margin-left: 2px; }
.col { display: flex; flex-direction: column; }
.btn { height: 26.300px; flex: none; display: flex; align-items: center; letter-spacing: -.15px; }
.btn.cmd { letter-spacing: -.5px; }
.btn svg { width: 19px; height: 19px; margin: -3px 2px 0 0; }
.off { color: #565656; }
.c64 { width: 64px; margin-left: 8px; } .c74 { width: 70px; }
.c150 { width: 150px; margin-left: 1px; } .c101 { width: 101px; } .c118 { width: 112px; }
.c107 { width: 107px; margin-left: 6px; } .c168 { width: 168px; } .c130 { width: 130px; } .c120 { width: 125px; margin-left: 1px; }
.form { width: 153px; padding-left: 8px; }
.combo { display: flex; align-items: center; justify-content: space-between; background: #212121; border: 1px solid #434346; padding-left: 3px; letter-spacing: -.15px; }
.arr { width: 19px; align-self: stretch; background: #333337; display: flex; align-items: center; justify-content: center; }
.arr::before { content: ""; border: 4px solid transparent; border-top-color: #999; border-bottom: 0; }
.rc { width: 150px; height: 26px; }
.frow { height: 26.300px; display: flex; align-items: center; padding-left: 3px; }
.dist { margin-left: 7px; }
.cores { letter-spacing: -.3px; }
.input { width: 58px; height: 26px; margin-left: 3px; border: 1px solid #434346; padding: 3px 4px; }

.work { flex: 1; display: flex; min-height: 0; }
.left { width: 371px; display: flex; flex-direction: column; background: #26292f; }
.phead { height: 25px; flex: none; display: flex; align-items: center; background: #2a2d33; border: 1px solid #363a40; border-bottom: 0; padding: 0 5px 0 5px; letter-spacing: -.05px; }
.dots { flex: 1; height: 7px; margin: 0 5px 0 6px; background-image: radial-gradient(circle, #454a51 .8px, transparent 1px), radial-gradient(circle, #454a51 .8px, transparent 1px); background-size: 6px 6px; background-position: 0 0, 3px 3px; }
.outline { display: flex; flex-direction: column; height: 526px; }
.obar { height: 34px; display: flex; align-items: center; background: #2d2d30; padding-left: 12px; }
.grip { width: 7px; height: 22px; background-image: radial-gradient(circle, #4a4a4a .8px, transparent 1px), radial-gradient(circle, #4a4a4a .8px, transparent 1px); background-size: 6px 6px; background-position: 0 0, 3px 3px; }
.oc { width: 124px; height: 28px; margin-left: 9px; }
.search { width: 112px; height: 28px; margin: 0 6px 0 1px; border: 1px solid #434346; background: #212121; color: #666; padding: 4px; letter-spacing: -.05px; }
.tree { flex: 1; background: #212121; position: relative; font-size: 13.300px; letter-spacing: -.28px; }
.lines { position: absolute; left: 0; top: 0; overflow: visible; }
.node { height: 20px; display: flex; align-items: center; position: relative; }
.node b { font-size: 14px; letter-spacing: .25px; }
.root { padding-left: 11px; } .n1 { padding-left: 10px; } .n2 { padding-left: 43.500px; } .n3 { padding-left: 77px; } .n4 { padding-left: 111px; }
.ex { width: 12px; height: 12px; }
.ck { width: 10px; height: 10px; margin: 8px 1px 0 11px; }
.ic { width: 18px; height: 18px; margin-right: 7px; }
.sel { background: #f0f0f0; color: #111; padding: 0 3px 0 2px; margin-left: -2px; line-height: 20px; }
.details { flex: 1; display: flex; flex-direction: column; min-height: 0; padding-top: 5px; }
.dbody { flex: 1; display: flex; min-height: 0; overflow: hidden; background: #212121; }
.grid { width: 349px; padding-left: 17px; }
.dr { height: 22.500px; display: flex; border-top: 1px solid #8e8e8e; border-left: 1px solid #8e8e8e; line-height: 21px; position: relative; color: #e4e4e4; letter-spacing: -.12px; }
.dr span { display: flex; align-items: center; width: 173px; padding-left: 4px; }
.dr span:first-child { width: 158px; padding-left: 3px; border-right: 1px solid #8e8e8e; }
.dr.ro span:last-child { background: #465963; }
.cat b { padding-left: 3px; letter-spacing: -.1px; }
.dr .ex { position: absolute; left: -16px; top: 5px; }
.cb { width: 15px; height: 15px; background: #fff; margin-right: 5px; }
.scroll { flex: 1; background: #f0f0f0; padding: 21px 0 0 11px; }
.scroll i { display: block; width: 3px; height: 222px; background: #8a8a8a; border-radius: 2px; }

.right { width: 1549px; padding-left: 5px; display: flex; flex-direction: column; background: #26292f; }
.view { height: 663px; flex: none; position: relative; background: linear-gradient(#222, #626262); color: #ddd; font-size: 14px; }
.caption { position: absolute; left: 18.500px; top: 18px; display: flex; flex-direction: column; line-height: 18.750px; letter-spacing: -.02px; }
.legend { position: absolute; left: 18px; top: 147px; display: flex; }
.bar { width: 20px; height: 191px; margin-top: 10px; background: #bbb; padding: 3px 1px 2px; display: grid; grid-template-rows: repeat(9, 1fr); gap: 1px; }
.k1 { background: #f00; } .k2 { background: #ffb200; } .k3 { background: #ff0; } .k4 { background: #b2ff00; } .k5 { background: #0f0; } .k6 { background: #00ffb2; } .k7 { background: #0ff; } .k8 { background: #00b2ff; } .k9 { background: #00f; }
.vals { margin-left: 11px; display: flex; flex-direction: column; line-height: 20.800px; letter-spacing: -.1px; }
.vals b { letter-spacing: .25px; }
.logo { position: absolute; right: 9px; top: 0; width: 140px; color: #fff; font-family: Inter, sans-serif; font-weight: 700; }
.brand { position: relative; height: 58px; padding-top: 8px; text-align: right; font-size: 44px; line-height: 48px; letter-spacing: -1.200px; }
.brand .a { color: transparent; }
.brand svg { position: absolute; left: 1px; top: 11px; }
.ver { font-size: 22.500px; line-height: 20px; text-align: right; height: 28px; border-bottom: 2px solid #bbb; letter-spacing: -.4px; margin-top: -1px; }
.stu { font-size: 23.500px; line-height: 36px; margin-left: 10px; letter-spacing: -.1px; }
.model { position: absolute; left: 564px; top: 269px; }
.ruler { position: absolute; left: 552px; top: 588px; width: 440px; }
.top, .bot { display: flex; letter-spacing: -.05px; }
.top span, .bot span { flex: none; }
.top span:nth-child(1) { margin-left: -14px; width: 212px; } .top span:nth-child(2) { width: 221px; }
.rbar { height: 14px; display: grid; grid-template-columns: repeat(4, 1fr); border: 1px solid #ccc; border-left: 0; border-bottom-width: 2px; }
.rbar .on { background: #000; }
.bot { padding-top: 3px; } .bot span:nth-child(1) { margin-left: 88px; width: 221px; }
.triad { position: absolute; left: 1334px; top: 529px; }
.triad text { font-size: 14px; }

.bottom { flex: 1; display: flex; gap: 5px; padding-top: 4px; min-height: 0; }
.graph { width: 769px; display: flex; flex-direction: column; }
.gbar { height: 34px; flex: none; display: flex; align-items: center; background: #2d2d30; padding-left: 12px; border-bottom: 1px solid #555; }
.anim { margin-left: 14px; width: 79px; letter-spacing: .15px; }
.s2 { margin-left: 13px; } .tog { margin-left: 6px; width: 28px; height: 28px; border: 2px solid #2c7cd2; display: flex; align-items: center; justify-content: center; }
.s3 { margin-left: 4px; } .sep { width: 1px; height: 26px; background: #4a4a4e; margin-left: 9px; } .sep + .tog { margin-left: 2px; }
.s4 { margin-left: 5px; } .s5 { margin-right: 2px; }
.gc { width: 125px; height: 28px; }
.s6 { margin-left: 4px; } .s7 { margin-left: 6px; } .s8 { margin-left: 9px; } .s9 { margin-left: 6px; } .s7 + .sep, .s8 + .sep { margin-left: 8px; } .s10 { margin-left: 7px; }
.plot { background: #9d9d9d; font-weight: 700; }
.yl { font-size: 16px; } .xl { font-size: 15px; letter-spacing: .3px; }
.tabular { flex: 1; background: #212121; }
.table { display: grid; grid-template-columns: 18px 59px 128px 131px 120px; grid-template-rows: 22px 20px; width: 457px; border-right: 1px solid #ddd; }
.th { background: #9d9d9d; color: #111; border: 1px solid #ddd; border-width: 1px 0 1px 1px; display: flex; align-items: center; padding-left: 3px; letter-spacing: -.4px; }
.td { background: #606060; border: 1px solid #ddd; border-width: 0 0 1px 1px; padding: 2px 0 0 4px; letter-spacing: -.2px; line-height: 17px; }
.tick { width: 18px; height: 18px; background: #fff; color: #000; text-align: center; margin-right: 5px; font-size: 15px; }
.red { color: #c4122a; } .green { color: #128a12; } .blue { color: #1818d8; }

.status { height: 26px; flex: none; display: flex; background: #3e3e3e; border-bottom: 1px solid #1c4587; line-height: 27px; padding-left: 10px; letter-spacing: .05px; }
.status span { display: flex; align-items: center; }
.ready { width: 1260px; } .msg { width: 132px; } .msg svg { margin-right: 2px; } .nosel { width: 111px; }
.metric { width: 234px; letter-spacing: .36px; } .metric svg { margin-right: 6px; } .deg { width: 67px; } .rad { width: 49px; }
```
